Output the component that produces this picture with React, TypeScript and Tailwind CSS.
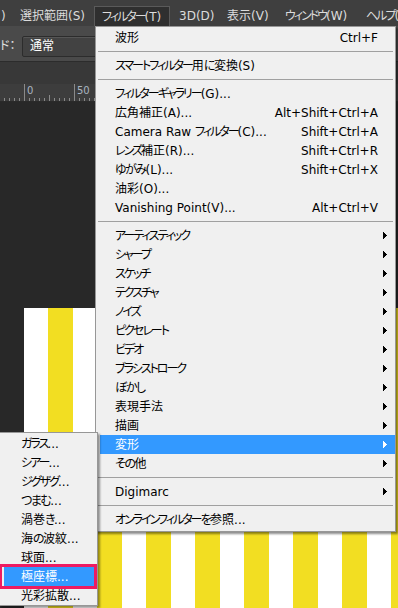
import React from "react";

type Item =
  | { sep: true }
  | { sep?: false; label: string; shortcut?: string; arrow?: boolean; active?: boolean };

const filterItems: Item[] = [
  { label: "波形", shortcut: "Ctrl+F" },
  { sep: true },
  { label: "スマートフィルター用に変換(S)" },
  { sep: true },
  { label: "フィルターギャラリー(G)..." },
  { label: "広角補正(A)...", shortcut: "Alt+Shift+Ctrl+A" },
  { label: "Camera Raw フィルター(C)...", shortcut: "Shift+Ctrl+A" },
  { label: "レンズ補正(R)...", shortcut: "Shift+Ctrl+R" },
  { label: "ゆがみ(L)...", shortcut: "Shift+Ctrl+X" },
  { label: "油彩(O)..." },
  { label: "Vanishing Point(V)...", shortcut: "Alt+Ctrl+V" },
  { sep: true },
  { label: "アーティスティック", arrow: true },
  { label: "シャープ", arrow: true },
  { label: "スケッチ", arrow: true },
  { label: "テクスチャ", arrow: true },
  { label: "ノイズ", arrow: true },
  { label: "ピクセレート", arrow: true },
  { label: "ビデオ", arrow: true },
  { label: "ブラシストローク", arrow: true },
  { label: "ぼかし", arrow: true },
  { label: "表現手法", arrow: true },
  { label: "描画", arrow: true },
  { label: "変形", arrow: true, active: true },
  { label: "その他", arrow: true },
  { sep: true },
  { label: "Digimarc", arrow: true },
  { sep: true },
  { label: "オンラインフィルターを参照..." },
];

const subItems = [
  "ガラス...",
  "シアー...",
  "ジグザグ...",
  "つまむ...",
  "渦巻き...",
  "海の波紋...",
  "球面...",
  "極座標...",
  "光彩拡散...",
];

// Meiryo UI has narrow kana; tighten kana runs
function JP({ text }: { text: string }) {
  const parts = text.split(/([\u30a0-\u30ff]+|[\u3040-\u309f]+)/);
  return (
    <>
      {parts.map((p, i) =>
        /^[\u30a0-\u30ff]+$/.test(p) ? (
          <span key={i} className="tracking-[-2px]">
            {p}
          </span>
        ) : /^[\u3040-\u309f]+$/.test(p) ? (
          <span key={i} className="tracking-[-1.5px]">
            {p}
          </span>
        ) : (
          <React.Fragment key={i}>{p}</React.Fragment>
        )
      )}
    </>
  );
}

function Arrow({ white }: { white?: boolean }) {
  return (
    <svg width="4" height="7" viewBox="0 0 4 7" shapeRendering="crispEdges">
      <path d="M0 0L4 3.5L0 7Z" fill={white ? "#ffffff" : "#000000"} />
    </svg>
  );
}

function Ruler() {
  const ticks = [];
  for (let i = 0; i < 80; i++) {
    const x = 4 + i * 5;
    const rel = x - 24;
    let h = 3;
    if (rel % 50 === 0) h = 17;
    else if (rel % 25 === 0) h = 6;
    ticks.push(
      <div
        key={i}
        className="absolute bottom-0 w-px bg-[#8a8a8a]"
        style={{ left: x, height: h }}
      />
    );
  }
  return (
    <div className="relative h-[18px] shrink-0 bg-[#3d3d3d] border-b border-[#2a2a2a]">
      {ticks}
      <span className="absolute left-[27px] top-[1px] text-[10px] leading-[12px] text-[#a9b4c0]">0</span>
      <span className="absolute left-[77px] top-[1px] text-[10px] leading-[12px] text-[#a9b4c0]">50</span>
    </div>
  );
}

export default function App() {
  const stripes = [];
  for (let i = 0; i < 8; i++) {
    stripes.push(<div key={"w" + i} className="w-[24px] shrink-0 bg-white" />);
    stripes.push(<div key={"y" + i} className="w-[25px] shrink-0 bg-[#f2de22]" />);
  }

  return (
    <div className="relative w-[398px] h-[608px] overflow-hidden bg-[#282828] flex flex-col font-['DejaVu_Sans','Noto_Sans_CJK_JP',sans-serif] [font-feature-settings:'palt']">
      {/* Menu bar */}
      <div className="h-[26px] shrink-0 bg-[#3f3f3f] flex items-end text-[12px] text-[#dcdcdc] whitespace-nowrap overflow-hidden">
        <div className="w-[20px] shrink-0 h-[20px] flex items-center pl-[1px]">)</div>
        <div className="w-[74px] shrink-0 h-[20px] flex items-center">
          <JP text="選択範囲(S)" />
        </div>
        <div className="w-[76px] shrink-0 h-[20px] flex items-center pl-[7px] bg-[#2f2f2f] border border-b-0 border-[#5a5a5a]">
          <JP text="フィルター(T)" />
        </div>
        <div className="w-[48px] shrink-0 h-[20px] flex items-center ml-[9px]">3D(D)</div>
        <div className="w-[58px] shrink-0 h-[20px] flex items-center">
          <JP text="表示(V)" />
        </div>
        <div className="w-[81px] shrink-0 h-[20px] flex items-center">
          <JP text="ウィンドウ(W)" />
        </div>
        <div className="shrink-0 h-[20px] flex items-center">
          <JP text="ヘルプ(H)" />
        </div>
      </div>

      {/* Options bar */}
      <div className="h-[36px] shrink-0 bg-[#4a4a4a] border-b border-[#2c2c2c] flex items-center text-[12px] text-[#e0e0e0]">
        <span className="w-[22px] shrink-0 mt-[5px]">ド：</span>
        <div className="w-[120px] h-[21px] mt-[5px] bg-[#424242] border border-[#2c2c2c] rounded-[2px] shadow-[inset_0_1px_0_#555] flex items-center pl-[7px] text-white">
          通常
        </div>
      </div>

      {/* tab strip */}
      <div className="h-[22px] shrink-0 bg-[#383838]" />

      <Ruler />

      {/* Canvas area */}
      <div className="flex-1 pl-[24px] pt-[206px] overflow-hidden">
        <div className="flex h-full">{stripes}</div>
      </div>

      {/* Filter menu */}
      <div className="absolute left-[95px] top-[26px] w-[301px] bg-[#f0f0f0] border border-[#979797] pt-[1px] pb-[2px] shadow-[2px_2px_2px_rgba(0,0,0,0.45)] text-[12px] text-black">
        {filterItems.map((it, i) =>
          it.sep ? (
            <div key={i} className="h-[9px] flex items-center px-[2px]">
              <div className="w-full h-px bg-[#a0a0a0]" />
            </div>
          ) : (
            <div
              key={i}
              className={
                "h-[19px] flex items-center ml-[4px] pl-[15px] pr-[8px] whitespace-nowrap " +
                (it.active ? "bg-[#3399ff] text-white" : "")
              }
            >
              <span className="flex-1">
                <JP text={it.label} />
              </span>
              {it.shortcut && <span className="mr-[9px]">{it.shortcut}</span>}
              {it.arrow && <Arrow white={it.active} />}
            </div>
          )
        )}
      </div>

      {/* Sub menu */}
      <div className="absolute -left-[1px] top-[432px] w-[99px] bg-[#f0f0f0] border border-[#979797] pt-[1px] shadow-[2px_2px_2px_rgba(0,0,0,0.4)] text-[12px] text-black">
        {subItems.map((s, i) =>
          i === 7 ? (
            <div key={i} className="h-[19px] relative">
              <div className="absolute -left-[1px] -top-[3px] -bottom-[3px] right-0 border-[3px] border-[#ee1b61]" />
              <div className="h-[19px] ml-[4px] mr-[2px] bg-[#3399ff] text-white flex items-center pl-[17px] whitespace-nowrap">
                <JP text={s} />
              </div>
            </div>
          ) : (
            <div key={i} className="h-[19px] flex items-center pl-[21px] whitespace-nowrap">
              <JP text={s} />
            </div>
          )
        )}
      </div>
    </div>
  );
}
